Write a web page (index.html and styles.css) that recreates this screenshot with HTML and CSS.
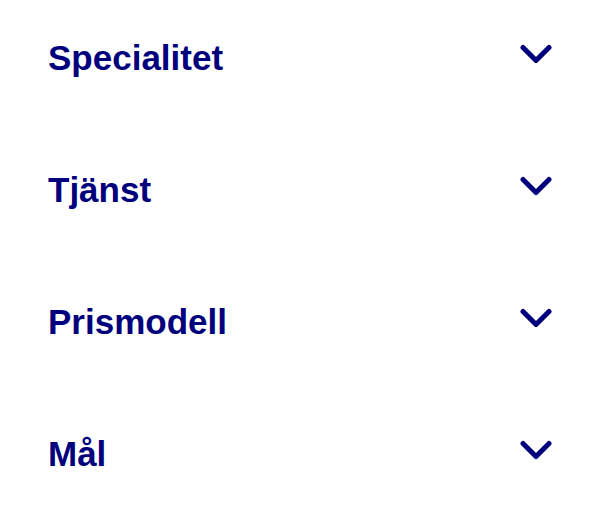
FILE: index.html
```html
<!DOCTYPE html>
<html lang="sv">
<head>
    <meta charset="UTF-8">
    <meta name="viewport" content="width=device-width, initial-scale=1.0">
    <title>Filter</title>
    <link rel="stylesheet" href="styles.css">
</head>
<body>
    <div class="filter-list">
        <button class="filter-row" type="button">
            <span class="filter-title">Specialitet</span>
            <svg class="chevron" viewBox="0 0 32 32" aria-hidden="true"><path d="M3 5.5 L16 18.5 L29 5.5"/></svg>
        </button>
        <button class="filter-row" type="button">
            <span class="filter-title">Tjänst</span>
            <svg class="chevron" viewBox="0 0 32 32" aria-hidden="true"><path d="M3 5.5 L16 18.5 L29 5.5"/></svg>
        </button>
        <button class="filter-row" type="button">
            <span class="filter-title">Prismodell</span>
            <svg class="chevron" viewBox="0 0 32 32" aria-hidden="true"><path d="M3 5.5 L16 18.5 L29 5.5"/></svg>
        </button>
        <button class="filter-row" type="button">
            <span class="filter-title">Mål</span>
            <svg class="chevron" viewBox="0 0 32 32" aria-hidden="true"><path d="M3 5.5 L16 18.5 L29 5.5"/></svg>
        </button>
    </div>
</body>
</html>
```

FILE: styles.css
```css
* {
    margin: 0;
    padding: 0;
    box-sizing: border-box;
}

body {
    background-color: #fff;
    font-family: 'Liberation Sans', Arial, sans-serif;
    overflow: hidden;
}

.filter-list {
    display: flex;
    flex-direction: column;
    padding: 0 48px;
}

.filter-row {
    display: flex;
    align-items: center;
    justify-content: space-between;
    width: 100%;
    height: 132px;
    padding-bottom: 16px;
    background: none;
    border: none;
    cursor: pointer;
    color: #00007d;
    font-family: inherit;
    text-align: left;
}

.filter-title {
    font-size: 35px;
    font-weight: 700;
    line-height: 36px;
}

.chevron {
    width: 32px;
    height: 32px;
    fill: none;
    stroke: currentColor;
    stroke-width: 5;
    stroke-linecap: round;
    stroke-linejoin: round;
}
```
